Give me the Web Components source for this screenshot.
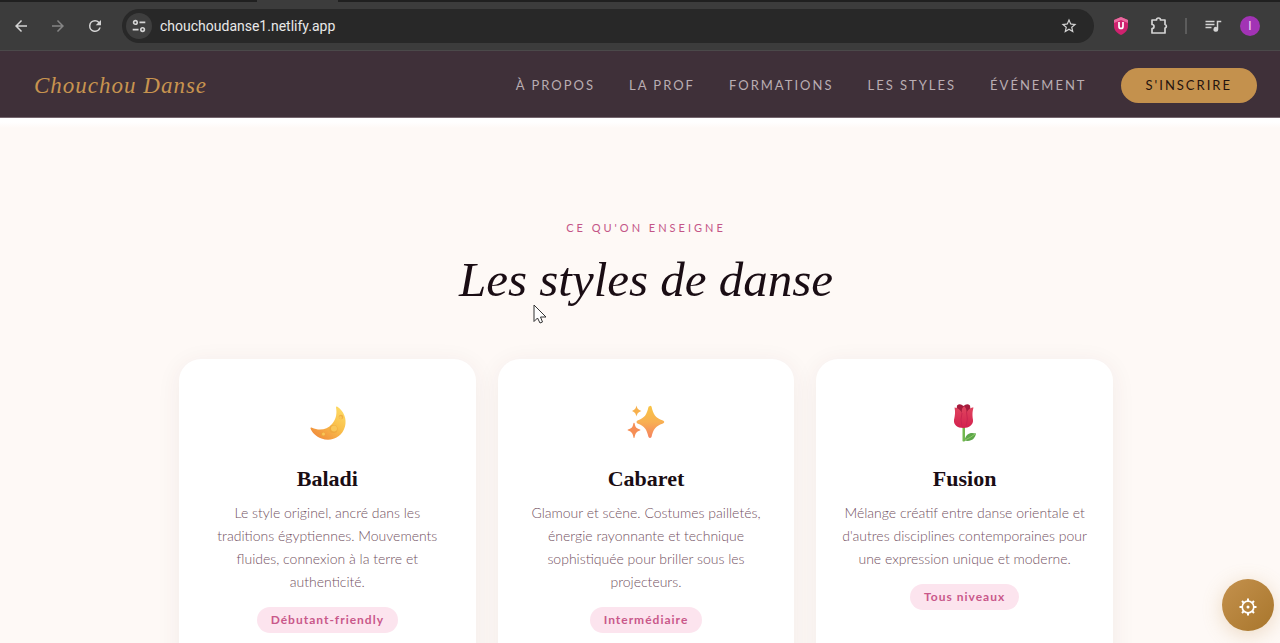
<!DOCTYPE html>
<html lang="fr">
<head>
<meta charset="utf-8">
<meta name="viewport" content="width=device-width, initial-scale=1">
<title>Chouchou Danse</title>
<style>
  html, body { margin: 0; height: 100%; }
  body { font-family: Lato, "Liberation Sans", sans-serif; background: #fef9f6; overflow: hidden; }
</style>
</head>
<body>
<browser-window>
  <browser-toolbar slot="toolbar" url="chouchoudanse1.netlify.app"></browser-toolbar>
  <site-nav>
    <nav-link href="#a-propos">À PROPOS</nav-link>
    <nav-link href="#prof">LA PROF</nav-link>
    <nav-link href="#formations">FORMATIONS</nav-link>
    <nav-link href="#styles">LES STYLES</nav-link>
    <nav-link href="#evenement">ÉVÉNEMENT</nav-link>
    <nav-link href="#inscription" kind="button">S'INSCRIRE</nav-link>
  </site-nav>
  <style-section label="CE QU'ON ENSEIGNE" heading="Les styles de danse">
    <style-card heading="Baladi" level="Débutant-friendly">
      <svg slot="icon" width="40" height="40" viewBox="-1 0 40 40" aria-hidden="true">
        <defs><linearGradient id="moon" x1="1" y1="0" x2=".2" y2="1"><stop stop-color="#ffe06a"/><stop offset=".5" stop-color="#f9bf4b"/><stop offset="1" stop-color="#f08a3c"/></linearGradient></defs>
        <path d="M29 3.500C36 8 39 16 37 23.500C34 34.500 23 39 13.500 35.500C8 33.500 4 29.500 2.500 25.500C2.300 24.500 3 24.200 4 24.800C11 28 19 27 24 21C28.500 16 29 10 28 4.500Q28 3.200 29 3.500Z" fill="url(#moon)"/>
        <g fill="#eda63c" opacity=".75"><circle cx="25.500" cy="26" r="4"/><circle cx="15" cy="31.500" r="2.300"/><circle cx="33" cy="14" r="2.300"/></g>
        <g fill="#f9c658"><circle cx="26" cy="25.500" r="3"/><circle cx="15.500" cy="31" r="1.500"/><circle cx="32.500" cy="14.500" r="1.500"/></g>
      </svg>
      Le style originel, ancré dans les traditions&nbsp;égyptiennes. Mouvements fluides, connexion à la terre et authenticité.
    </style-card>
    <style-card heading="Cabaret" level="Intermédiaire">
      <svg slot="icon" width="40" height="40" viewBox="0 0 40 40" aria-hidden="true">
        <defs><linearGradient id="spark" x1="0" y1="0" x2="0" y2="1"><stop stop-color="#f8c444"/><stop offset=".5" stop-color="#f8b052"/><stop offset="1" stop-color="#f58260"/></linearGradient></defs>
        <path fill="url(#spark)" d="M23.500 3.500Q24 2 25.500 3.500C27.500 12 29 14.500 37 17.500Q39.500 19 37 20.500C29 23.500 27.500 26 25.500 34Q24 36 22.500 34C20.500 26 19 23.500 11.500 20.500Q9.500 19 11.500 17.500C19 14.500 20.500 12 22.500 4Q23 3 23.500 3.500Z"/>
        <path fill="#f7b04c" d="M10.500 2.500C11.500 6 12 6.500 15.500 8C12 9.500 11.500 10 10.500 13.500C9.500 10 9 9.500 6 8C9 6.500 9.500 6 10.500 2.500Z"/>
        <path fill="#f68e55" d="M7.500 20Q8 19.500 8.500 20C9.500 24.500 10 25 14 26.500Q15 27 14 27.500C10 29 9.500 30 8.500 34.500Q8 35.500 7.500 34.500C6.500 30 6 29 2 27.500Q1 27 2 26.500C6 25 6.500 24.500 7.500 20Z"/>
      </svg>
      Glamour et scène. Costumes pailletés, énergie rayonnante et technique sophistiquée pour briller sous les projecteurs.
    </style-card>
    <style-card heading="Fusion" level="Tous niveaux">
      <svg slot="icon" width="40" height="40" viewBox="1 0 40 40" aria-hidden="true">
        <defs><linearGradient id="petal" x1="0" y1="0" x2="0" y2="1"><stop stop-color="#e0455f"/><stop offset="1" stop-color="#d3214e"/></linearGradient></defs>
        <path d="M18.500 24H21V38Q19.500 39 18.500 38Z" fill="#72b84f"/>
        <path d="M20.500 37.500C22 30.500 26 29 32 30.500C31 36 27 39 20.500 37.500Z" fill="#5da64a"/>
        <path d="M21 37Q26 35 31.500 30.800" stroke="#8dcb66" fill="none"/>
        <path d="M13 2.500Q16 0 19.500 3Q23 0 26 2.500L27.500 14H12Z" fill="#a51c3d"/>
        <path d="M10.500 4.500C14 4.500 16.500 7 18 10C17 5 20 3 20.500 3.500C23 6 22.500 9 22.500 10C23.500 7 26 4.500 29.500 4.500C28 10 28.500 13 29 17C29.500 21.500 25 25 19.500 25C13 25 9.500 21.500 10 17C11 12 11.500 9 10.500 4.500Z" fill="url(#petal)"/>
        <path d="M18 10Q16 16 18 24M22.500 9Q24.500 16 22 24" stroke="#c92550" fill="none"/>
      </svg>
      Mélange créatif entre danse orientale et d'autres disciplines contemporaines pour une expression unique et moderne.
    </style-card>
  </style-section>
  <settings-button slot="overlay"></settings-button>
  <mouse-pointer slot="overlay"></mouse-pointer>
</browser-window>

<script>
class BrowserWindow extends HTMLElement {
  constructor() {
    super();
    this.attachShadow({ mode: 'open' }).innerHTML = `
      <style>
        :host { display: flex; flex-direction: column; height: 100vh; position: relative; overflow: hidden; }
        main { flex: 1; min-height: 0; overflow: hidden; }
      </style>
      <slot name="toolbar"></slot>
      <main><slot></slot></main>
      <slot name="overlay"></slot>
    `;
  }
}
customElements.define('browser-window', BrowserWindow);

class BrowserToolbar extends HTMLElement {
  constructor() {
    super();
    this.attachShadow({ mode: 'open' }).innerHTML = `
      <style>
        :host { display: block; flex: none; background: #3c3c3c; border-bottom: 1px solid #4b494a; }
        .tabs { height: 2px; background: linear-gradient(90deg, #202020 257px, #3c3c3c 257px, #3c3c3c 338px, #202020 338px); }
        .bar { display: flex; align-items: center; height: 48px; padding: 0 20px 0 7px; }
        button { display: grid; place-items: center; flex: none; padding: 0; border: 0; border-radius: 50%; background: none; color: #d4d4d4; width: 28px; height: 28px; }
        button svg { width: 18px; height: 18px; fill: currentColor; }
        .history { display: flex; gap: 9px; }
        .history button:nth-child(2) { color: #858585; }
        .address { display: flex; flex: 1; align-items: center; gap: 8px; height: 34px; margin: 0 13px; padding: 0 11px 0 4px; border-radius: 17px; background: #282828; }
        .address .site { width: 26px; height: 26px; background: #3e3e3e; }
        input { flex: 1; min-width: 0; border: 0; padding: 0; background: none; color: #e8e8e8; font: 14px/20px Roboto, sans-serif; outline: none; }
        .tools { display: flex; align-items: center; gap: 10px; }
        .line { width: 2px; height: 16px; margin: 0 2px; background: #5c5c5c; }
        .tools .avatar { width: 20px; height: 20px; margin-left: 3px; background: #a233b5; color: #f3dff7; font: 12px/20px Roboto, sans-serif; }
      </style>
      <div class="tabs"></div>
      <div class="bar">
        <div class="history">
          <button aria-label="Retour"><svg viewBox="0 0 24 24"><path d="M20 11H7.830l5.590-5.590L12 4l-8 8 8 8 1.410-1.410L7.830 13H20z"/></svg></button>
          <button aria-label="Avancer"><svg viewBox="0 0 24 24"><path d="M12 4l-1.410 1.410L16.170 11H4v2h12.170l-5.580 5.590L12 20l8-8z"/></svg></button>
          <button aria-label="Actualiser"><svg viewBox="0 0 24 24"><path d="M17.650 6.350A7.960 7.960 0 0 0 12 4a8 8 0 1 0 7.730 10h-2.080A6 6 0 1 1 12 6c1.660 0 3.140.69 4.220 1.780L13 11h7V4z"/></svg></button>
        </div>
        <div class="address">
          <button class="site" aria-label="Informations sur le site"><svg viewBox="0 0 20 20"><g fill="none" stroke="currentColor" stroke-width="1.800"><circle cx="6" cy="6" r="2"/><path d="M10.500 6H17M3 14h6.500"/><circle cx="14" cy="14" r="2"/></g></svg></button>
          <input type="text" aria-label="Adresse" spellcheck="false">
          <button aria-label="Ajouter aux favoris"><svg viewBox="0 0 24 24"><path d="M22 9.240l-7.190-.620L12 2 9.190 8.630 2 9.240l5.460 4.730L5.820 21 12 17.270 18.180 21l-1.630-7.030zM12 15.400l-3.760 2.270 1-4.280-3.320-2.880 4.380-.380L12 6.100l1.710 4.040 4.380.380-3.320 2.880 1 4.280z"/></svg></button>
        </div>
        <div class="tools">
          <button aria-label="Protection"><svg viewBox="1 1 18 18"><path d="M10 1l7 3v6c0 4-2.500 7-7 9-4.500-2-7-5-7-9V4z" fill="#cf226f"/><path d="M10 1l7 3v3l-7-3-7 3V4z" fill="#ea6a9f"/><path d="M8 6v4.500a2 2 0 0 0 4 0V6" fill="none" stroke="#fff" stroke-width="1.700"/></svg></button>
          <button aria-label="Extensions"><svg viewBox="0 0 18 18"><path d="M2 3h4.500a2 2 0 0 1 4 0H15v4.500a1.800 1.800 0 0 1 0 3.500v5H2v-4.500a2 2 0 0 0 0-4z" fill="none" stroke="currentColor" stroke-width="1.700" stroke-linejoin="round"/></svg></button>
          <span class="line"></span>
          <button aria-label="Lecture en cours"><svg viewBox="0 0 24 24"><path d="M2 5h12v2H2zm0 4h12v2H2zm0 4h8v2H2zM17 5h6v2h-4v9.500a3.200 3.200 0 1 1-2-3z"/></svg></button>
          <button class="avatar" aria-label="Profil">I</button>
        </div>
      </div>
    `;
    this.shadowRoot.querySelector('input').value = this.getAttribute('url');
  }
}
customElements.define('browser-toolbar', BrowserToolbar);

class SiteNav extends HTMLElement {
  constructor() {
    super();
    this.attachShadow({ mode: 'open' }).innerHTML = `
      <style>
        :host { display: block; background: #3f3039; border-bottom: 1px solid #75666e; }
        header { display: flex; align-items: center; justify-content: space-between; padding: 17px 23px 14px 34px; }
        .logo { color: #c8944f; font: italic 23px/32px "Liberation Serif", serif; letter-spacing: 1px; text-decoration: none; }
        nav { display: flex; align-items: center; gap: 34px; }
      </style>
      <header>
        <a class="logo" href="#">Chouchou Danse</a>
        <nav><slot></slot></nav>
      </header>
    `;
  }
}
customElements.define('site-nav', SiteNav);

class NavLink extends HTMLElement {
  constructor() {
    super();
    this.attachShadow({ mode: 'open' }).innerHTML = `
      <style>
        :host { display: block; }
        a { display: block; color: #b9adb2; font-size: 13px; line-height: 19px; letter-spacing: 2px; text-decoration: none; white-space: nowrap; }
        :host([kind="button"]) a { padding: 8px 25px; border-radius: 18px; background: #c4914d; color: #24130f; }
      </style>
      <a><slot></slot></a>
    `;
    this.shadowRoot.querySelector('a').href = this.getAttribute('href');
  }
}
customElements.define('nav-link', NavLink);

class StyleSection extends HTMLElement {
  constructor() {
    super();
    this.attachShadow({ mode: 'open' }).innerHTML = `
      <style>
        :host { display: block; padding: 102px 0 96px 12px; background: linear-gradient(#fff 4px, #fef9f6 10px); text-align: center; }
        p { margin: 0; color: #c45587; font-size: 11px; line-height: 16px; letter-spacing: 3px; }
        h2 { margin: 12px 0 47px; color: #1a0d14; font: italic 49px/64px "Liberation Serif", serif; }
        .grid { display: grid; grid-template-columns: repeat(3, 1fr); gap: 22px; max-width: 934px; margin: 0 auto; }
      </style>
      <p>${this.getAttribute('label')}</p>
      <h2>${this.getAttribute('heading')}</h2>
      <div class="grid"><slot></slot></div>
    `;
  }
}
customElements.define('style-section', StyleSection);

class StyleCard extends HTMLElement {
  constructor() {
    super();
    this.attachShadow({ mode: 'open' }).innerHTML = `
      <style>
        :host { display: block; padding: 44px 24px; border-radius: 22px; background: #fff; box-shadow: 0 4px 24px rgba(80, 40, 50, 0.07); }
        ::slotted(svg) { display: block; margin: 0 auto; }
        h3 { margin: 21px 0 7px; color: #1a0d14; font: bold 22px/30px "Liberation Serif", serif; }
        p { margin: 0 0 14px; color: #735162; font-size: 14px; font-weight: 300; line-height: 23px; }
        .level { display: inline-block; padding: 4px 14px; border-radius: 13px; background: #fce4ee; color: #c9588a; font-size: 12px; font-weight: 700; line-height: 18px; letter-spacing: 1px; }
      </style>
      <slot name="icon"></slot>
      <h3>${this.getAttribute('heading')}</h3>
      <p><slot></slot></p>
      <span class="level">${this.getAttribute('level')}</span>
    `;
  }
}
customElements.define('style-card', StyleCard);

class SettingsButton extends HTMLElement {
  constructor() {
    super();
    this.attachShadow({ mode: 'open' }).innerHTML = `
      <style>
        :host { position: absolute; right: 6px; bottom: 12px; }
        button { display: grid; place-items: center; width: 52px; height: 52px; padding: 4px 0 0; border: 0; border-radius: 50%; background: linear-gradient(135deg, #c4914d, #a8762c); box-shadow: 0 4px 20px rgba(196, 145, 77, 0.3); }
      </style>
      <button aria-label="Réglages">
        <svg width="18" height="18" viewBox="-9 -9 18 18" fill="none" stroke="#fff">
          <circle r="5.800" stroke-width="1.700"/>
          <circle r="1.500" fill="#fff" stroke="none"/>
          <path stroke-width="2" d="M0-6v-2.500M0 6v2.500M-6 0h-2.500M6 0h2.500M4.300-4.300l1.700-1.700M-4.300-4.300L-6-6M4.300 4.300L6 6M-4.300 4.300L-6 6"/>
        </svg>
      </button>
    `;
  }
}
customElements.define('settings-button', SettingsButton);

class MousePointer extends HTMLElement {
  constructor() {
    super();
    this.attachShadow({ mode: 'open' }).innerHTML = `
      <style>
        :host { position: absolute; left: 533px; top: 304px; pointer-events: none; }
        svg { display: block; }
      </style>
      <svg width="14" height="20" viewBox="0 0 14 20"><path d="M1 1v16.500l3.500-3.500 2.500 5 2.500-1-2-5H13z" fill="#fff" stroke="#333"/></svg>
    `;
  }
}
customElements.define('mouse-pointer', MousePointer);
</script>
</body>
</html>
